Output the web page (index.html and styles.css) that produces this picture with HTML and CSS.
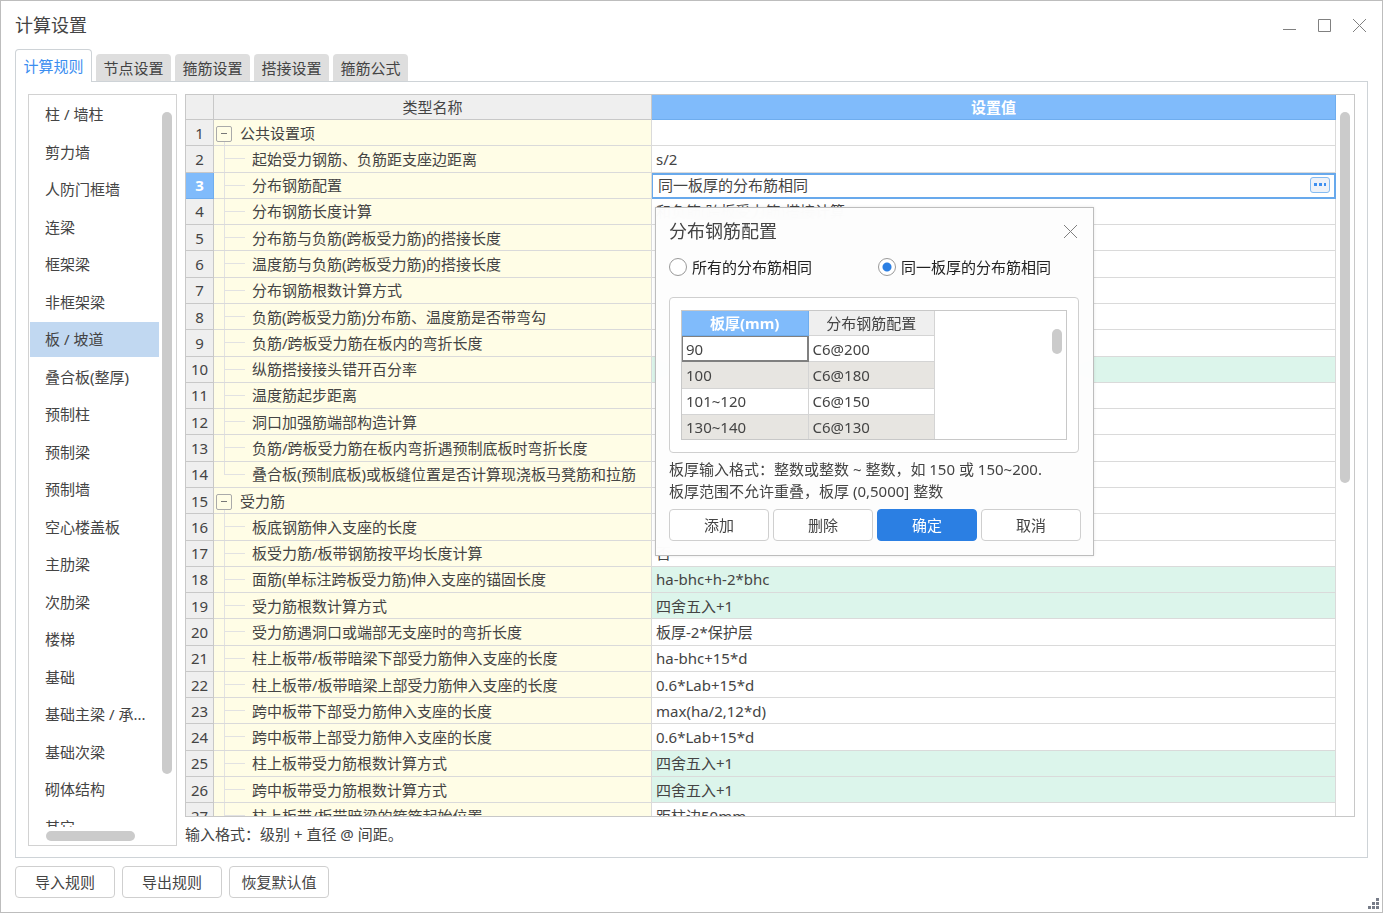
FILE: index.html
```
<!DOCTYPE html>
<html lang="zh-CN">
<head>
    <meta charset="UTF-8">
    <title>计算设置</title>
    <link rel="stylesheet" href="styles.css">
</head>
<body>
    <div class="window">
        <header class="titlebar">
            <h1>计算设置</h1>
            <div class="window-controls">
                <button type="button" aria-label="最小化"><svg width="15" height="15" viewBox="0 0 15 15"><path d="M1 11.5h13"/></svg></button>
                <button type="button" aria-label="最大化"><svg width="15" height="15" viewBox="0 0 15 15"><path d="M1.5 1.5h12v12h-12z"/></svg></button>
                <button type="button" aria-label="关闭"><svg width="15" height="15" viewBox="0 0 15 15"><path d="M1 1l13 13M14 1L1 14"/></svg></button>
            </div>
        </header>

        <nav class="tabs">
            <button type="button" class="tab active">计算规则</button>
            <button type="button" class="tab">节点设置</button>
            <button type="button" class="tab">箍筋设置</button>
            <button type="button" class="tab">搭接设置</button>
            <button type="button" class="tab">箍筋公式</button>
        </nav>

        <main class="panel">
            <aside class="sidebar">
                <div class="list-view">
                    <ul class="list">
                        <li><a href="#">柱 / 墙柱</a></li>
                        <li><a href="#">剪力墙</a></li>
                        <li><a href="#">人防门框墙</a></li>
                        <li><a href="#">连梁</a></li>
                        <li><a href="#">框架梁</a></li>
                        <li><a href="#">非框架梁</a></li>
                        <li class="selected"><a href="#">板 / 坡道</a></li>
                        <li><a href="#">叠合板(整厚)</a></li>
                        <li><a href="#">预制柱</a></li>
                        <li><a href="#">预制梁</a></li>
                        <li><a href="#">预制墙</a></li>
                        <li><a href="#">空心楼盖板</a></li>
                        <li><a href="#">主肋梁</a></li>
                        <li><a href="#">次肋梁</a></li>
                        <li><a href="#">楼梯</a></li>
                        <li><a href="#">基础</a></li>
                        <li><a href="#">基础主梁 / 承...</a></li>
                        <li><a href="#">基础次梁</a></li>
                        <li><a href="#">砌体结构</a></li>
                        <li><a href="#">其它</a></li>
                    </ul>
                    <div class="scroll-x"></div>
                </div>
                <div class="scroll-y"></div>
            </aside>

            <section class="content">
                <div class="grid-box">
                    <div class="grid-view">
                        <table class="grid">
                            <colgroup>
                                <col class="col-num">
                                <col class="col-name">
                                <col>
                            </colgroup>
                            <thead>
                                <tr><th></th><th>类型名称</th><th class="current">设置值</th></tr>
                            </thead>
                            <tbody>
                                <tr><th>1</th><td class="group"><button type="button" class="toggle" aria-label="折叠"></button>公共设置项</td><td></td></tr>
                                <tr><th>2</th><td class="item">起始受力钢筋、负筋距支座边距离</td><td>s/2</td></tr>
                                <tr><th class="current">3</th><td class="item">分布钢筋配置</td><td class="editing"><div class="editor"><input type="text" aria-label="分布钢筋配置" value="同一板厚的分布筋相同"><button type="button" aria-label="更多"><svg width="12" height="4" viewBox="0 0 12 4"><path d="M0 0h3v3H0zM5 0h3v3H5zM10 0h2v3h-2z"/></svg></button></div></td></tr>
                                <tr><th>4</th><td class="item">分布钢筋长度计算</td><td>和负筋(跨板受力筋)搭接计算</td></tr>
                                <tr><th>5</th><td class="item">分布筋与负筋(跨板受力筋)的搭接长度</td><td></td></tr>
                                <tr><th>6</th><td class="item">温度筋与负筋(跨板受力筋)的搭接长度</td><td></td></tr>
                                <tr><th>7</th><td class="item">分布钢筋根数计算方式</td><td></td></tr>
                                <tr><th>8</th><td class="item">负筋(跨板受力筋)分布筋、温度筋是否带弯勾</td><td></td></tr>
                                <tr><th>9</th><td class="item">负筋/跨板受力筋在板内的弯折长度</td><td></td></tr>
                                <tr class="changed"><th>10</th><td class="item">纵筋搭接接头错开百分率</td><td></td></tr>
                                <tr><th>11</th><td class="item">温度筋起步距离</td><td></td></tr>
                                <tr><th>12</th><td class="item">洞口加强筋端部构造计算</td><td></td></tr>
                                <tr><th>13</th><td class="item">负筋/跨板受力筋在板内弯折遇预制底板时弯折长度</td><td></td></tr>
                                <tr><th>14</th><td class="item last">叠合板(预制底板)或板缝位置是否计算现浇板马凳筋和拉筋</td><td></td></tr>
                                <tr><th>15</th><td class="group"><button type="button" class="toggle" aria-label="折叠"></button>受力筋</td><td></td></tr>
                                <tr><th>16</th><td class="item">板底钢筋伸入支座的长度</td><td></td></tr>
                                <tr><th>17</th><td class="item">板受力筋/板带钢筋按平均长度计算</td><td>否</td></tr>
                                <tr class="changed"><th>18</th><td class="item">面筋(单标注跨板受力筋)伸入支座的锚固长度</td><td>ha-bhc+h-2*bhc</td></tr>
                                <tr class="changed"><th>19</th><td class="item">受力筋根数计算方式</td><td>四舍五入+1</td></tr>
                                <tr><th>20</th><td class="item">受力筋遇洞口或端部无支座时的弯折长度</td><td>板厚-2*保护层</td></tr>
                                <tr><th>21</th><td class="item">柱上板带/板带暗梁下部受力筋伸入支座的长度</td><td>ha-bhc+15*d</td></tr>
                                <tr><th>22</th><td class="item">柱上板带/板带暗梁上部受力筋伸入支座的长度</td><td>0.6*Lab+15*d</td></tr>
                                <tr><th>23</th><td class="item">跨中板带下部受力筋伸入支座的长度</td><td>max(ha/2,12*d)</td></tr>
                                <tr><th>24</th><td class="item">跨中板带上部受力筋伸入支座的长度</td><td>0.6*Lab+15*d</td></tr>
                                <tr class="changed"><th>25</th><td class="item">柱上板带受力筋根数计算方式</td><td>四舍五入+1</td></tr>
                                <tr class="changed"><th>26</th><td class="item">跨中板带受力筋根数计算方式</td><td>四舍五入+1</td></tr>
                                <tr><th>27</th><td class="item">柱上板带/板带暗梁的箍筋起始位置</td><td>距柱边50mm</td></tr>
                            </tbody>
                        </table>
                    </div>
                    <div class="scroll-y"></div>
                </div>
                <p class="hint">输入格式：级别 + 直径 @ 间距。</p>
            </section>
        </main>

        <footer class="footer">
            <button type="button" class="btn">导入规则</button>
            <button type="button" class="btn">导出规则</button>
            <button type="button" class="btn">恢复默认值</button>
        </footer>
        <svg class="size-grip" width="12" height="12" viewBox="0 0 12 12"><path d="M8 0h3v3H8zM4 4h3v3H4zM8 4h3v3H8zM0 8h3v3H0zM4 8h3v3H4zM8 8h3v3H8z"/></svg>
    </div>

    <div class="dialog" role="dialog" aria-labelledby="dialog-title">
        <div class="dialog-header">
            <h2 id="dialog-title">分布钢筋配置</h2>
            <button type="button" aria-label="关闭"><svg width="15" height="15" viewBox="0 0 15 15"><path d="M1 1l13 13M14 1L1 14"/></svg></button>
        </div>
        <div class="radios">
            <label><input type="radio" name="mode">所有的分布筋相同</label>
            <label><input type="radio" name="mode" checked>同一板厚的分布筋相同</label>
        </div>
        <div class="frame">
            <div class="thickness-box">
                <table class="thickness">
                    <thead>
                        <tr><th class="current">板厚(mm)</th><th>分布钢筋配置</th></tr>
                    </thead>
                    <tbody>
                        <tr><td class="focus">90</td><td>C6@200</td></tr>
                        <tr><td>100</td><td>C6@180</td></tr>
                        <tr><td>101~120</td><td>C6@150</td></tr>
                        <tr><td>130~140</td><td>C6@130</td></tr>
                    </tbody>
                </table>
                <div class="scroll-y"></div>
            </div>
        </div>
        <p class="note">板厚输入格式：整数或整数 ~ 整数，如 150 或 150~200.<br>板厚范围不允许重叠，板厚 (0,5000] 整数</p>
        <div class="dialog-buttons">
            <button type="button" class="btn">添加</button>
            <button type="button" class="btn">删除</button>
            <button type="button" class="btn primary">确定</button>
            <button type="button" class="btn">取消</button>
        </div>
    </div>
</body>
</html>
```
FILE: styles.css
```
* {
    margin: 0;
    padding: 0;
    box-sizing: border-box;
}

body {
    height: 100vh;
    font-family: "Noto Sans", "Noto Sans CJK SC", sans-serif;
    font-size: 15px;
    line-height: 22px;
    color: #444;
    background: #fff;
    overflow: hidden;
}

button, input {
    font: inherit;
    color: inherit;
}

button {
    border: none;
    background: none;
}

a {
    color: inherit;
    text-decoration: none;
}

.window {
    position: relative;
    display: flex;
    flex-direction: column;
    height: 100vh;
    padding: 0 14px 14px;
    border: 1px solid #bdbdbd;
}

/* title bar */
.titlebar {
    display: flex;
    justify-content: space-between;
    align-items: center;
    height: 48px;
}

h1, h2 {
    font-size: 18px;
    font-weight: normal;
    line-height: 26px;
}

.window-controls {
    display: flex;
    gap: 20px;
    margin-right: 1px;
}

.window-controls button, .dialog-header button {
    display: flex;
}

.window-controls svg, .dialog-header svg {
    fill: none;
    stroke: #808080;
}

/* tabs */
.tabs {
    position: relative;
    display: flex;
    align-items: flex-end;
    gap: 4px;
    height: 32px;
}

.tab {
    width: 75px;
    height: 27px;
    border-radius: 4px 4px 0 0;
    background: #dedede;
}

.tab.active {
    width: 77px;
    height: 33px;
    margin-bottom: -1px;
    border: 1px solid #ced3d7;
    border-bottom: none;
    background: #fff;
    color: #3c8ef0;
}

.panel {
    flex: 1;
    display: flex;
    gap: 8px;
    min-height: 0;
    padding: 12px 12px 11px;
    border: 1px solid #ced3d7;
}

/* component list */
.sidebar {
    display: flex;
    width: 149px;
    border: 1px solid #d2d2d2;
}

.list-view {
    display: flex;
    flex-direction: column;
    flex: 1;
    padding-left: 1px;
}

.list {
    flex: 1;
    min-height: 0;
    padding-top: 2px;
    overflow: hidden;
    list-style: none;
}

.list li {
    height: 35px;
    margin-bottom: 3px;
    padding-left: 15px;
    line-height: 35px;
    white-space: nowrap;
}

/* rows alternate so that two of them take 75px */
.list li:nth-child(even) {
    margin-bottom: 2px;
}

.list li.selected {
    background: #c1d8f1;
}

.scroll-y {
    width: 10px;
    border-radius: 5px;
    background: #cbcbcb;
}

.scroll-x {
    width: 89px;
    height: 10px;
    margin: 4px 0 4px 16px;
    border-radius: 5px;
    background: #cbcbcb;
}

.sidebar .scroll-y {
    height: 662px;
    margin: 17px 4px 0 3px;
}

/* settings grid */
.content {
    flex: 1;
    display: flex;
    flex-direction: column;
    min-width: 0;
}

.grid-box {
    flex: 1;
    display: flex;
    min-height: 0;
    border: 1px solid #c8c8c8;
}

.grid-box .scroll-y {
    height: 371px;
    margin: 17px 4px 0;
}

.grid-view {
    flex: 1;
    overflow: hidden;
}

.grid {
    width: 100%;
    height: 735px;
    table-layout: fixed;
    border-collapse: separate;
    border-spacing: 0;
}

.col-num {
    width: 28px;
}

.col-name {
    width: 438px;
}

.grid th, .grid td {
    height: 26px;
    border-right: 1px solid #dadada;
    border-bottom: 1px solid #dadada;
    white-space: nowrap;
}

.grid th {
    border-color: #c8c8c8;
    background: #efefef;
    font-weight: normal;
}

.grid thead th {
    height: 25px;
}

.grid th.current {
    border-color: #6fadee;
    background: #80bbfb;
    color: #fff;
    font-weight: bold;
}

.grid td {
    padding-left: 4px;
}

.grid .changed td {
    background-color: #dcf5eb;
}

.grid td.group, .grid td.item {
    background-color: #fffde6;
    background-repeat: no-repeat;
}

/* tree branch lines */
.grid td.item {
    padding-left: 38px;
    background-image: linear-gradient(#e2e2e2, #e2e2e2), linear-gradient(#e2e2e2, #e2e2e2);
    background-position: 10px 0, 10px 12px;
    background-size: 1px 100%, 21px 1px;
}

.grid td.item.last {
    background-size: 1px 12px, 21px 1px;
}

.grid td.group {
    padding-left: 2px;
    background-image: linear-gradient(#e2e2e2, #e2e2e2);
    background-position: 10px 20px;
    background-size: 1px 10px;
}

.toggle {
    display: inline-block;
    width: 16px;
    height: 16px;
    margin-right: 8px;
    border: 1px solid #aaa;
    border-radius: 2px;
    background: linear-gradient(#777, #777) center / 6px 1px no-repeat #fffde6;
    vertical-align: -2px;
}

.grid td.editing {
    padding: 0;
    border-color: #68a9ec;
    box-shadow: inset 1px 2px #68a9ec, inset -1px -1px #68a9ec;
}

.editor {
    display: flex;
    align-items: center;
    padding: 0 5px 0 6px;
}

.editor input {
    flex: 1;
    height: 22px;
    border: none;
    outline: none;
    background: transparent;
}

.editor button {
    display: flex;
    justify-content: center;
    align-items: center;
    width: 20px;
    height: 16px;
    border: 1px solid #84bbf2;
    border-radius: 3px;
    background: #edf1f8;
}

.editor svg {
    fill: #3c8ef0;
}

.hint {
    margin: 6px 0 1px;
}

/* buttons */
.footer {
    display: flex;
    gap: 7px;
    margin-top: 8px;
}

.btn {
    width: 100px;
    height: 32px;
    border: 1px solid #cfcfcf;
    border-radius: 4px;
    background: #fff;
}

.btn.primary {
    border-color: #2b7fe3;
    background: #2b7fe3;
    color: #fff;
}

.size-grip {
    position: absolute;
    right: 2px;
    bottom: 2px;
    fill: #777c88;
}

/* floating dialog */
.dialog {
    position: absolute;
    left: 655px;
    top: 207px;
    width: 439px;
    padding: 10px 11px 14px 13px;
    border: 1px solid #bdbdbd;
    background: rgba(253, 253, 253, 0.97);
    backdrop-filter: blur(10px);
    box-shadow: 0 0 3px rgba(0, 0, 0, 0.1);
}

.dialog-header {
    display: flex;
    justify-content: space-between;
    align-items: center;
    margin-right: 4px;
}

.radios {
    display: grid;
    grid-template-columns: 209px 1fr;
    margin-top: 12px;
    color: #222;
}

.radios label {
    display: flex;
    align-items: center;
    gap: 5px;
}

.radios input {
    appearance: none;
    width: 18px;
    height: 18px;
    border: 1px solid #999;
    border-radius: 50%;
    background: #fff;
}

.radios input:checked {
    background: radial-gradient(circle, #2b7fe3 4px, #fff 5px);
}

.frame {
    margin: 19px 3px 0 0;
    padding: 12px 11px;
    border: 1px solid #cfcfcf;
    border-radius: 4px;
    background: #fff;
}

.thickness-box {
    display: flex;
    justify-content: space-between;
    height: 130px;
    overflow: hidden;
    border: 1px solid #c8c8c8;
}

.thickness-box .scroll-y {
    height: 25px;
    margin: 18px 4px 0;
}

.thickness {
    width: 253px;
    height: 130px;
    table-layout: fixed;
    border-collapse: separate;
    border-spacing: 0;
}

.thickness th, .thickness td {
    height: 26px;
    border-right: 1px solid #d4d4d4;
    border-bottom: 1px solid #d4d4d4;
}

.thickness th {
    height: 25px;
    background: #efefef;
    font-weight: normal;
}

.thickness th.current {
    border-color: #6fadee;
    background: #80bbfb;
    color: #fff;
    font-weight: bold;
}

.thickness td {
    padding-left: 4px;
}

.thickness tr:nth-child(even) td {
    background: #e7e5e1;
}

.thickness td.focus {
    box-shadow: inset 0 0 0 1px #808080;
    border-color: #808080;
}

.note {
    margin-top: 5px;
}

.dialog-buttons {
    display: flex;
    gap: 4px;
    margin-top: 7px;
}
```
